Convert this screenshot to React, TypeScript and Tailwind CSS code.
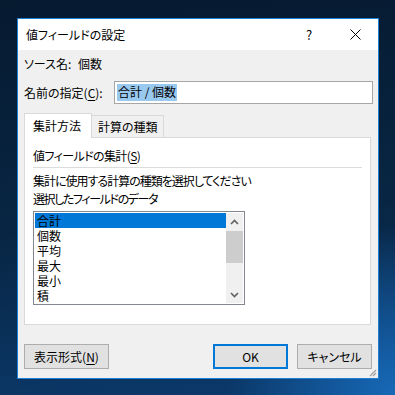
import React from "react";

const U = ({ c }: { c: string }) => <span className="underline underline-offset-[2px]">{c}</span>;

function Chevron({ up }: { up?: boolean }) {
  return (
    <svg width="9" height="6" viewBox="0 0 9 6">
      <path
        d={up ? "M1 5 L4.5 1.5 L8 5" : "M1 1 L4.5 4.5 L8 1"}
        fill="none"
        stroke="#606060"
        strokeWidth="1.6"
      />
    </svg>
  );
}

export default function App() {
  const items = ["合計", "個数", "平均", "最大", "最小", "積"];
  return (
    <div className="w-[395px] h-[395px] overflow-hidden bg-[radial-gradient(circle_at_100%_100%,#1769b8_0%,rgba(20,100,180,0)_30%),linear-gradient(175deg,#061a30_0%,#082644_55%,#0b3a6c_100%)] pl-[17px] pt-[18px] font-['Noto_Sans_CJK_JP',sans-serif] [font-feature-settings:'palt'] text-[12px] text-black">
      <div className="relative w-[362px] h-[361px] border border-[#1c80d6] bg-[#f0f0f0] flex flex-col">
        {/* title bar */}
        <div className="h-[31px] bg-white flex items-center shrink-0">
          <span className="pl-[8px] leading-[16px]">値フィールドの設定</span>
          <span className="ml-auto w-[46px] text-center leading-[16px] text-[13px]">?</span>
          <span className="w-[46px] flex justify-center items-center">
            <svg width="11" height="11" viewBox="0 0 11 11">
              <path d="M0.5 0.5 L10.5 10.5 M10.5 0.5 L0.5 10.5" stroke="#000" strokeWidth="1" />
            </svg>
          </span>
        </div>

        {/* body */}
        <div className="flex flex-col pl-[6px]">
          <div className="mt-[6px] h-[16px] leading-[16px] flex">
            <span className="w-[54px]">ソース名:</span>
            <span>個数</span>
          </div>

          <div className="mt-[9px] h-[23px] flex items-center">
            <span className="w-[90px] leading-[16px]">
              名前の指定(<U c="C" />):
            </span>
            <div className="w-[259px] h-[23px] border border-[#a6a6a6] bg-white flex items-center pl-[2px]">
              <span className="bg-[#99c9ef] leading-[16px] h-[17px] px-[1px]">合計 / 個数</span>
            </div>
          </div>

          {/* tabs */}
          <div className="mt-[9px] h-[24px] flex items-end">
            <div className="relative z-10 w-[68px] h-[25px] -mb-[1px] border border-b-0 border-[#d9d9d9] bg-white flex items-center pl-[8px] leading-[16px]">
              集計方法
            </div>
            <div className="w-[72px] h-[22px] border border-l-0 border-b-0 border-[#d9d9d9] bg-[#f0f0f0] flex items-center pl-[6px] leading-[16px]">
              計算の種類
            </div>
          </div>

          {/* panel */}
          <div className="w-[347px] h-[188px] border border-[#d9d9d9] bg-white pl-[8px] flex flex-col">
            <div className="mt-[10px] h-[16px] leading-[16px] tracking-[-0.6px]">
              値フィールドの集計(<U c="S" />)
            </div>
            <div className="mt-[3px] w-[329px] h-[1px] bg-[#dcdcdc]" />
            <div className="mt-[5px] h-[16px] leading-[16px] tracking-[-1px]">集計に使用する計算の種類を選択してください</div>
            <div className="mt-[2px] h-[16px] leading-[16px] tracking-[-1.4px]">選択したフィールドのデータ</div>

            {/* listbox */}
            <div className="mt-[4px] w-[212px] h-[94px] border border-[#828790] p-[1px] flex bg-white">
              <div className="w-[191px] flex flex-col">
                {items.map((it, i) => (
                  <div
                    key={it}
                    className={
                      "h-[15px] leading-[15px] pl-[2px] overflow-hidden " + (i === 0 ? "bg-[#0078d7]" : "")
                    }
                  >
                    {it}
                  </div>
                ))}
              </div>
              <div className="w-[17px] bg-[#f0f0f0] flex flex-col">
                <div className="h-[17px] flex items-center justify-center">
                  <Chevron up />
                </div>
                <div className="mt-[1px] h-[32px] bg-[#cdcdcd]" />
                <div className="flex-1" />
                <div className="h-[17px] flex items-center justify-center">
                  <Chevron />
                </div>
              </div>
            </div>
          </div>

          {/* buttons */}
          <div className="mt-[19px] flex">
            <div className="w-[85px] h-[25px] border border-[#adadad] bg-[#e1e1e1] flex items-center justify-center leading-[16px]">
              表示形式(<U c="N" />)
            </div>
            <div className="ml-[104px] w-[75px] h-[25px] border-2 border-[#0078d7] bg-[#e1e1e1] flex items-center justify-center leading-[16px]">
              OK
            </div>
            <div className="ml-[9px] w-[75px] h-[25px] border border-[#adadad] bg-[#e1e1e1] flex items-center justify-center leading-[16px]">
              キャンセル
            </div>
          </div>
        </div>

        {/* resize grip */}
        <svg className="absolute right-[1px] bottom-[1px]" width="9" height="9" viewBox="0 0 9 9">
          <path d="M8 2 L2 8 M8 5 L5 8" stroke="#a0a0a0" strokeWidth="1.2" />
        </svg>
      </div>
    </div>
  );
}
